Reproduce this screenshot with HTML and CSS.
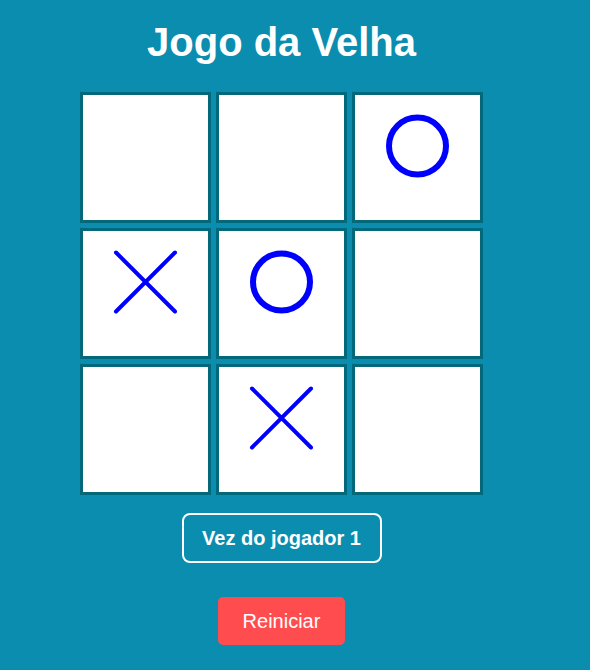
FILE: index.html
```html
<!DOCTYPE html>
<html lang="pt">
<head>
<meta charset="utf-8">
<title>Jogo da Velha</title>
<link rel="stylesheet" href="styles.css">
</head>
<body>
<div class="app">
  <h1 class="title">Jogo da Velha</h1>
  <div class="board">
    <div class="cell"></div>
    <div class="cell"></div>
    <div class="cell"><svg class="mark" viewBox="0 0 125 125" width="125" height="125"><circle cx="62.5" cy="51" r="28.5" fill="none" stroke="#0000ff" stroke-width="6"/></svg></div>
    <div class="cell"><svg class="mark" viewBox="0 0 125 125" width="125" height="125"><path d="M33 21.5 L92 80.5 M92 21.5 L33 80.5" stroke="#0000ff" stroke-width="4" stroke-linecap="round" fill="none"/></svg></div>
    <div class="cell"><svg class="mark" viewBox="0 0 125 125" width="125" height="125"><circle cx="62.5" cy="51" r="28.5" fill="none" stroke="#0000ff" stroke-width="6"/></svg></div>
    <div class="cell"></div>
    <div class="cell"></div>
    <div class="cell"><svg class="mark" viewBox="0 0 125 125" width="125" height="125"><path d="M33 21.5 L92 80.5 M92 21.5 L33 80.5" stroke="#0000ff" stroke-width="4" stroke-linecap="round" fill="none"/></svg></div>
    <div class="cell"></div>
  </div>
  <div class="status">Vez do jogador 1</div>
  <button class="reset">Reiniciar</button>
</div>
</body>
</html>
```
FILE: styles.css
```css
html, body {
  margin: 0;
  padding: 0;
  background: #0b8db0;
  height: 100%;
}
.app {
  width: 563px;
  display: flex;
  flex-direction: column;
  align-items: center;
  font-family: "Liberation Sans", Arial, sans-serif;
  color: #ffffff;
}
.title {
  margin: 19px 0 27px;
  font-size: 40px;
  line-height: 46px;
  font-weight: bold;
}
.board {
  display: grid;
  grid-template-columns: repeat(3, 131px);
  grid-auto-rows: 131px;
  gap: 5px;
}
.cell {
  box-sizing: border-box;
  width: 131px;
  height: 131px;
  border: 3px solid #03687a;
  background: #ffffff;
}
.mark {
  display: block;
}
.status {
  margin-top: 18px;
  box-sizing: border-box;
  width: 200px;
  height: 50px;
  border: 2px solid #ffffff;
  border-radius: 8px;
  display: flex;
  align-items: center;
  justify-content: center;
  font-size: 20px;
  font-weight: bold;
}
.reset {
  margin-top: 34px;
  width: 127px;
  height: 48px;
  border: none;
  border-radius: 5px;
  background: #ff4d4f;
  color: #ffffff;
  font-family: "Liberation Sans", Arial, sans-serif;
  font-size: 20px;
  padding: 0;
}
```
